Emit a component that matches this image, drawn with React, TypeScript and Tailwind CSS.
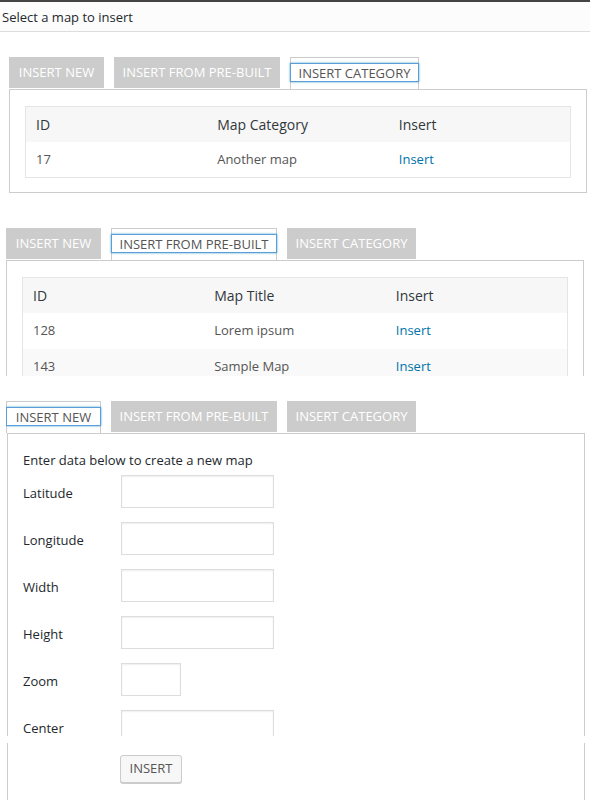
const font = { fontFamily: '"Open Sans", "Noto Sans", sans-serif' }

type TabName = 'new' | 'prebuilt' | 'category'

const tabs: { key: TabName; label: string; w: string }[] = [
  { key: 'new', label: 'INSERT NEW', w: 'w-[95px]' },
  { key: 'prebuilt', label: 'INSERT FROM PRE-BUILT', w: 'w-[166px]' },
  { key: 'category', label: 'INSERT CATEGORY', w: 'w-[129px]' },
]

function Tabs({ active }: { active: TabName }) {
  return (
    <div className="flex gap-[10px] h-[31px]">
      {tabs.map(t =>
        t.key === active ? (
          <div key={t.key} className={`${t.w} h-[32px] border border-b-0 border-[#ccc] bg-white pt-[5px]`}>
            <span className="-mx-px block h-[19px] border border-[#5b9dd9] text-center text-[13px] leading-[18px] text-[#555] shadow-[0_0_2px_rgba(30,140,190,0.8)]">
              {t.label}
            </span>
          </div>
        ) : (
          <div key={t.key} className={`${t.w} flex items-center justify-center bg-[#ccc] pt-px text-[13px] text-white`}>
            {t.label}
          </div>
        )
      )}
    </div>
  )
}

function DataTable({ title, rows }: { title: string; rows: { id: string; name: string }[] }) {
  return (
    <table className="w-full table-fixed border border-[#e5e5e5] text-left">
      <thead>
        <tr className="bg-[#f7f7f7]">
          <th className="h-[35px] px-[10px] text-[14px] font-normal text-[#32373c]">ID</th>
          <th className="h-[35px] px-[10px] text-[14px] font-normal text-[#32373c]">{title}</th>
          <th className="h-[35px] px-[10px] text-[14px] font-normal text-[#32373c]">Insert</th>
        </tr>
      </thead>
      <tbody>
        {rows.map((r, i) => (
          <tr key={r.id} className={i % 2 === 1 ? 'bg-[#f9f9f9]' : 'bg-white'}>
            <td className="h-[36px] px-[10px] text-[13px] text-[#555]">{r.id}</td>
            <td className="h-[36px] px-[10px] text-[13px] text-[#555]">{r.name}</td>
            <td className="h-[36px] px-[10px] text-[13px] text-[#0073aa]">Insert</td>
          </tr>
        ))}
      </tbody>
    </table>
  )
}

const fields: { label: string; w: string }[] = [
  { label: 'Latitude', w: 'w-[153px]' },
  { label: 'Longitude', w: 'w-[153px]' },
  { label: 'Width', w: 'w-[153px]' },
  { label: 'Height', w: 'w-[153px]' },
  { label: 'Zoom', w: 'w-[60px]' },
  { label: 'Center', w: 'w-[153px]' },
]

export default function App() {
  return (
    <div className="w-[590px] h-[800px] overflow-hidden bg-white text-[#23282d]" style={font}>
      <div className="h-[2px] bg-[#444]" />
      <div className="h-[30px] border-b border-[#ddd] bg-[#fcfcfc] pl-[2px] text-[13px] leading-[31px]">
        Select a map to insert
      </div>

      {/* category tab */}
      <div className="ml-[9px] w-[578px] pt-[25px]">
        <Tabs active="category" />
        <div className="mt-[1px] border border-[#ccc] px-[15px] pt-[16px] pb-[14px]">
          <DataTable title="Map Category" rows={[{ id: '17', name: 'Another map' }]} />
        </div>
      </div>

      {/* pre-built tab, cut off */}
      <div className="mt-[35px] ml-[6px] w-[578px] h-[148px] overflow-hidden">
        <Tabs active="prebuilt" />
        <div className="mt-[1px] h-[200px] border border-[#ccc] px-[15px] pt-[16px]">
          <DataTable
            title="Map Title"
            rows={[
              { id: '128', name: 'Lorem ipsum' },
              { id: '143', name: 'Sample Map' },
            ]}
          />
        </div>
      </div>

      {/* new map tab, cut off */}
      <div className="mt-[25px] ml-[6px] w-[579px] h-[335px] overflow-hidden">
        <Tabs active="new" />
        <div className="mt-[1px] ml-px border border-[#ccc] px-[15px] pt-[17px]">
          <p className="text-[13px] leading-[18px]">Enter data below to create a new map</p>
          <div className="mt-[6px] flex flex-col gap-[14px]">
            {fields.map(f => (
              <div key={f.label} className="flex items-center">
                <label className="w-[98px] pt-[5px] text-[13px]">{f.label}</label>
                <input
                  className={`${f.w} h-[33px] border border-[#ddd] bg-white shadow-[inset_0_1px_2px_rgba(0,0,0,0.07)] outline-none`}
                />
              </div>
            ))}
          </div>
        </div>
      </div>

      <div className="mt-[7px] ml-[7px] w-[578px] h-[60px] border-x border-[#ccc] pl-[112px] pt-[12px]">
        <button className="h-[28px] w-[62px] rounded-[3px] border border-[#ccc] bg-[#f7f7f7] text-[13px] text-[#555] shadow-[0_1px_0_#ccc]">
          INSERT
        </button>
      </div>
    </div>
  )
}
